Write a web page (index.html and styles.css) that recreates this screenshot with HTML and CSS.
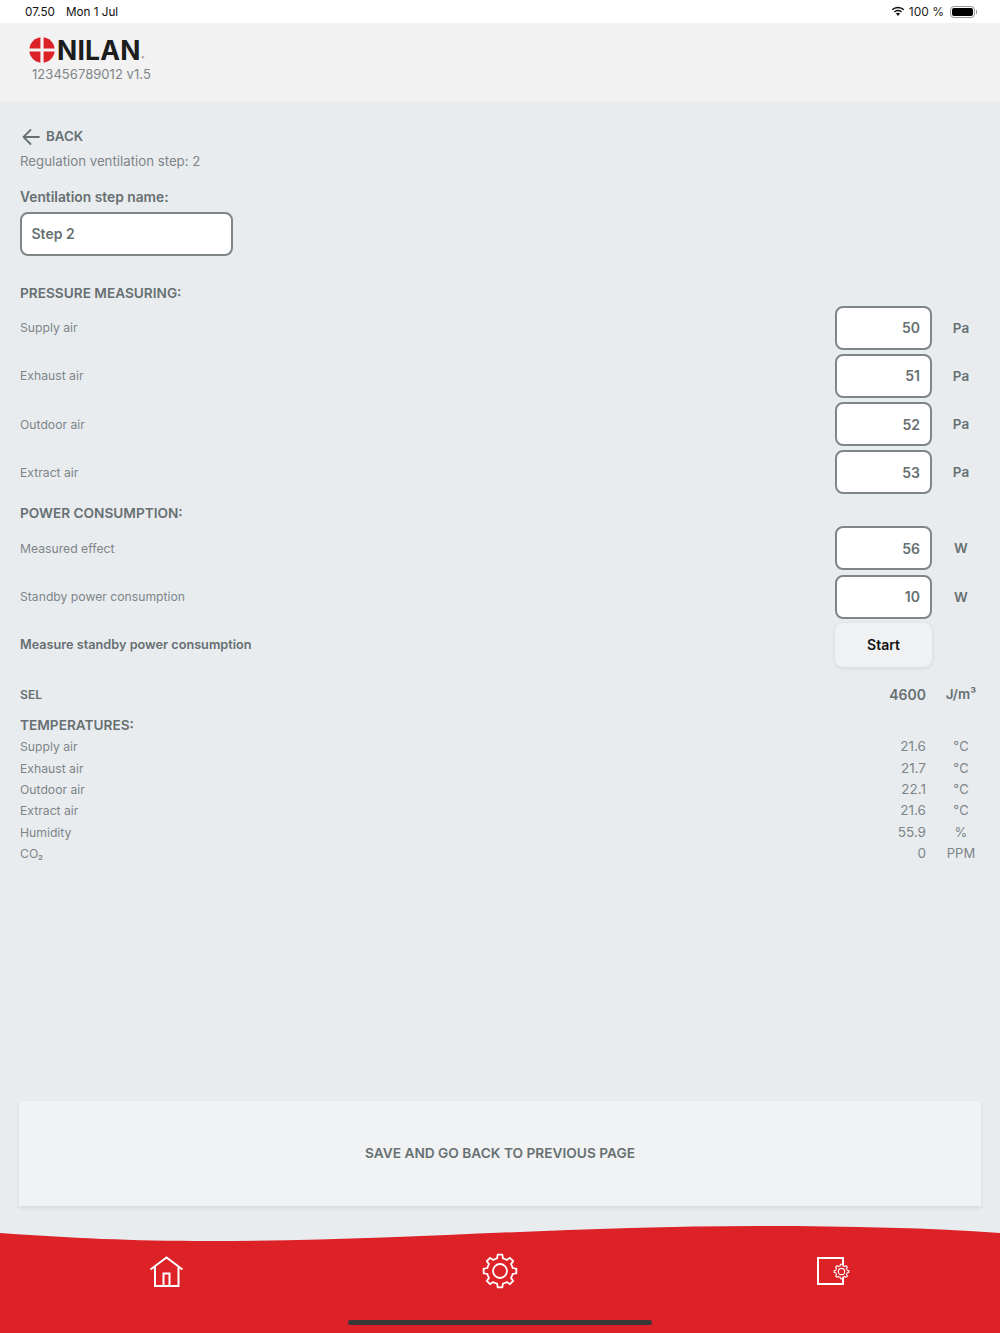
FILE: index.html
```html
<!DOCTYPE html>
<html lang="en">
<head>
<meta charset="utf-8">
<title>Regulation ventilation step</title>
<link rel="stylesheet" href="styles.css">
</head>
<body>
<svg class="defs" width="0" height="0" aria-hidden="true">
  <symbol id="gear" viewBox="-19 -19 38 38">
    <path d="M2.3-16.34L2.92-12.67A13 13 0 0 1 6.89-11.02L9.93-13.18L13.18-9.93L11.02-6.89A13 13 0 0 1 12.67-2.92L16.34-2.3V2.3L12.67 2.92A13 13 0 0 1 11.02 6.89L13.18 9.93L9.93 13.18L6.89 11.02A13 13 0 0 1 2.92 12.67L2.3 16.34H-2.3L-2.92 12.67A13 13 0 0 1-6.89 11.02L-9.93 13.18L-13.18 9.93L-11.02 6.89A13 13 0 0 1-12.67 2.92L-16.34 2.3V-2.3L-12.67-2.92A13 13 0 0 1-11.02-6.89L-13.18-9.93L-9.93-13.18L-6.89-11.02A13 13 0 0 1-2.92-12.67L-2.3-16.34Z"/>
    <circle r="7"/>
  </symbol>
</svg>
<div class="app">
  <div class="status">
    <div class="status-left"><span>07.50</span><span>Mon 1 Jul</span></div>
    <div class="status-right">
      <svg class="wifi" viewBox="0 0 16 12"><path d="M8 2.2c2.3 0 4.4.9 6 2.4l1.1-1.2C13.2 1.6 10.7.5 8 .5S2.800 1.600.9 3.400L2 4.600c1.600-1.500 3.700-2.400 6-2.400z"/><path d="M8 5.700c1.300 0 2.500.5 3.500 1.400l1.100-1.200C11.400 4.700 9.800 4 8 4s-3.400.7-4.600 1.900l1.100 1.200c1-.9 2.200-1.400 3.500-1.400z"/><path d="M8 7.500c-.9 0-1.700.3-2.300.9L8 11l2.300-2.600c-.6-.6-1.400-.9-2.300-.9z"/></svg>
      <span>100 %</span>
      <span class="battery"><span class="battery-fill"></span></span>
    </div>
  </div>
  <header class="brand">
    <div class="logo">
      <svg class="logo-mark" viewBox="0 0 26 26"><circle cx="13" cy="13" r="12.700" fill="#dc2127"/><path d="M11.400 0h3.200v26h-3.200zM0 11.400h26v3.200H0z" fill="#f2f2f2"/></svg>
      <span class="logo-text">NILAN</span><span class="logo-reg">®</span>
    </div>
    <div class="version">123456789012 v1.5</div>
  </header>
  <main class="main">
    <a class="back">
      <svg viewBox="0 0 20 18"><path d="M18 9H3M9.500 2L2.500 9l7 7" fill="none" stroke="#667072" stroke-width="1.800" stroke-linecap="round" stroke-linejoin="round"/></svg>
      <span>BACK</span>
    </a>
    <p class="crumb">Regulation ventilation step: 2</p>
    <label class="name-label">Ventilation step name:</label>
    <div class="field name-field">Step 2</div>

    <h2 class="section first">PRESSURE MEASURING:</h2>
    <div class="rows">
      <div class="row"><span class="lbl">Supply air</span><div class="field num">50</div><span class="unit">Pa</span></div>
      <div class="row"><span class="lbl">Exhaust air</span><div class="field num">51</div><span class="unit">Pa</span></div>
      <div class="row"><span class="lbl">Outdoor air</span><div class="field num">52</div><span class="unit">Pa</span></div>
      <div class="row"><span class="lbl">Extract air</span><div class="field num">53</div><span class="unit">Pa</span></div>
    </div>
    <h2 class="section second">POWER CONSUMPTION:</h2>
    <div class="rows">
      <div class="row"><span class="lbl">Measured effect</span><div class="field num">56</div><span class="unit">W</span></div>
      <div class="row"><span class="lbl">Standby power consumption</span><div class="field num">10</div><span class="unit">W</span></div>
      <div class="row"><span class="lbl strong">Measure standby power consumption</span><button class="start">Start</button></div>
    </div>
    <div class="sel row-text"><span>SEL</span><span class="val">4600</span><span class="unit">J/m³</span></div>
    <h2 class="section third">TEMPERATURES:</h2>
    <div class="temps">
      <div class="row-text"><span>Supply air</span><span class="val">21.6</span><span class="u">°C</span></div>
      <div class="row-text"><span>Exhaust air</span><span class="val">21.7</span><span class="u">°C</span></div>
      <div class="row-text"><span>Outdoor air</span><span class="val">22.1</span><span class="u">°C</span></div>
      <div class="row-text"><span>Extract air</span><span class="val">21.6</span><span class="u">°C</span></div>
      <div class="row-text"><span>Humidity</span><span class="val">55.9</span><span class="u">%</span></div>
      <div class="row-text"><span>CO₂</span><span class="val">0</span><span class="u">PPM</span></div>
    </div>
    <button class="save">SAVE AND GO BACK TO PREVIOUS PAGE</button>
  </main>
  <footer class="foot">
    <svg class="wave" viewBox="0 0 1000 107" preserveAspectRatio="none"><path d="M0 7C70 12 130 15 210 15C400 15 560 0 760 0C850 0 930 2 1000 7V107H0Z"/></svg>
    <nav class="nav">
      <svg class="ico home" viewBox="0 0 36 32"><path d="M1.500 13.500L17.500 1.500L33.500 13.500M6 10.500V30H29.500V10.500M14.500 30V17.500H20.500V30" fill="none" stroke="#fff" stroke-width="2"/></svg>
      <svg class="ico gear"><use href="#gear"/></svg>
      <div class="device">
        <svg class="device-gear"><use href="#gear"/></svg>
      </div>
    </nav>
    <div class="home-bar"></div>
  </footer>
</div>
</body>
</html>
```
FILE: styles.css
```css
* { box-sizing: border-box; }
html, body { margin: 0; padding: 0; }
body { width: 1000px; height: 1333px; overflow: hidden; font-family: Inter, "Liberation Sans", sans-serif; color: #667072; background: #e9ecef; }
.defs { position: absolute; }
.app { height: 1333px; display: flex; flex-direction: column; }

.status { height: 23px; background: #fff; color: #111; font-size: 11.700px; display: flex; justify-content: space-between; align-items: center; padding: 0 25px; }
.status-left { display: flex; gap: 11px; }
.status-right { display: flex; align-items: center; gap: 4px; color: #222; font-size: 12px; }
.wifi { width: 14px; height: 11px; fill: #111; }
.battery { width: 25px; height: 12px; border: 1px solid #999; border-radius: 4px; padding: 1px; margin-left: 2px; display: block; position: relative; }
.battery-fill { display: block; height: 100%; background: #000; border-radius: 2px; }
.battery::after { content: ""; position: absolute; right: -3px; top: 3px; width: 1.500px; height: 4px; background: #999; }

.brand { height: 78px; background: #f2f2f2; padding: 14px 0 0 29px; }
.logo { display: flex; align-items: center; height: 26px; }
.logo-mark { width: 26px; height: 26px; flex: none; }
.logo-text { font-weight: 700; font-size: 26.500px; letter-spacing: 0.200px; color: #1c1c1c; margin-left: 2px; line-height: 26px; }
.logo-reg { font-size: 4px; color: #555; align-self: flex-end; margin: 0 0 3px 1px; }
.version { font-size: 13px; letter-spacing: 0.050px; color: #7d8588; margin: 2px 0 0 3px; line-height: 18px; }

.main { flex: 1; display: flex; flex-direction: column; padding: 25px 10px 20px 20px; }
.back { display: flex; align-items: center; height: 20px; font-weight: 600; font-size: 13.300px; color: #667072; }
.back svg { width: 20px; height: 18px; margin: 1px 5px 0 1px; }
.crumb { margin: 5px 0 0; font-size: 13.250px; line-height: 20px; color: #7d8588; }
.name-label { margin-top: 16px; font-size: 13.800px; font-weight: 600; line-height: 20px; }

.field { background: #fff; border: 2px solid #808587; border-radius: 8px; font-weight: 600; color: #667072; font-size: 14px; display: flex; align-items: center; }
.name-field { width: 213px; height: 44px; margin: 5px 0 0 -0.500px; padding: 0 0 1px 10px; }
.num { height: 44px; justify-content: flex-end; padding-right: 10px; }

.section { margin: 0; font-size: 13.650px; font-weight: 600; line-height: 20px; color: #667072; }
.section.first { margin-top: 26.500px; }
.section.second { margin-top: 9px; }
.section.third { margin-top: 10.400px; }
.rows { display: flex; flex-direction: column; gap: 4.300px; margin-top: 3px; }
.row { display: grid; grid-template-columns: 1fr 97px 58px; align-items: center; height: 44px; }
.lbl { font-size: 12.200px; color: #7d8588; }
.lbl.strong { font-size: 12.700px; font-weight: 600; color: #667072; }
.unit { text-align: center; font-weight: 600; font-size: 13.500px; color: #667072; }
.start { height: 44px; border: 0; border-radius: 8px; background: #f0f1f3; font: 600 14px Inter, "Liberation Sans", sans-serif; color: #111; box-shadow: 0 1px 4px rgba(0, 0, 0, .1); }

.row-text { display: grid; grid-template-columns: 1fr 91px 6px 58px; font-size: 12.200px; line-height: 21.300px; color: #7d8588; }
.row-text .val { grid-column: 2; text-align: right; font-size: 13.500px; }
.row-text .u, .row-text .unit { grid-column: 4; text-align: center; font-size: 13px; }
.sel { margin-top: 16.700px; font-weight: 600; color: #667072; }
.sel .val { font-size: 14px; }
.sel .unit { font-size: 13.500px; white-space: nowrap; }
.temps { margin-top: 1px; }

.save { margin: auto 9px 0 -1px; height: 105px; padding-bottom: 2px; flex: none; border: 0; background: #f0f2f4; font: 600 13.700px Inter, "Liberation Sans", sans-serif; color: #667072; box-shadow: 0 2px 4px rgba(0, 0, 0, .08); }

.foot { height: 107px; position: relative; flex: none; }
.wave { position: absolute; inset: 0; width: 1000px; height: 107px; fill: #dc2127; }
.nav { position: absolute; inset: 0; }
.ico { position: absolute; }
.home { left: 149px; top: 30px; width: 36px; height: 32px; }
.gear { left: 481px; top: 26px; width: 38px; height: 38px; fill: none; stroke: #fff; stroke-width: 1.800px; }
.device { position: absolute; left: 816.500px; top: 31px; width: 27px; height: 28px; border: 2px solid #fff; }
.device-gear { position: absolute; left: 14px; top: 4px; width: 17px; height: 17px; fill: #dc2127; stroke: #fff; stroke-width: 2.400px; }
.home-bar { position: absolute; left: 348px; top: 94px; width: 304px; height: 5px; background: #383838; border-radius: 3px; }
```
